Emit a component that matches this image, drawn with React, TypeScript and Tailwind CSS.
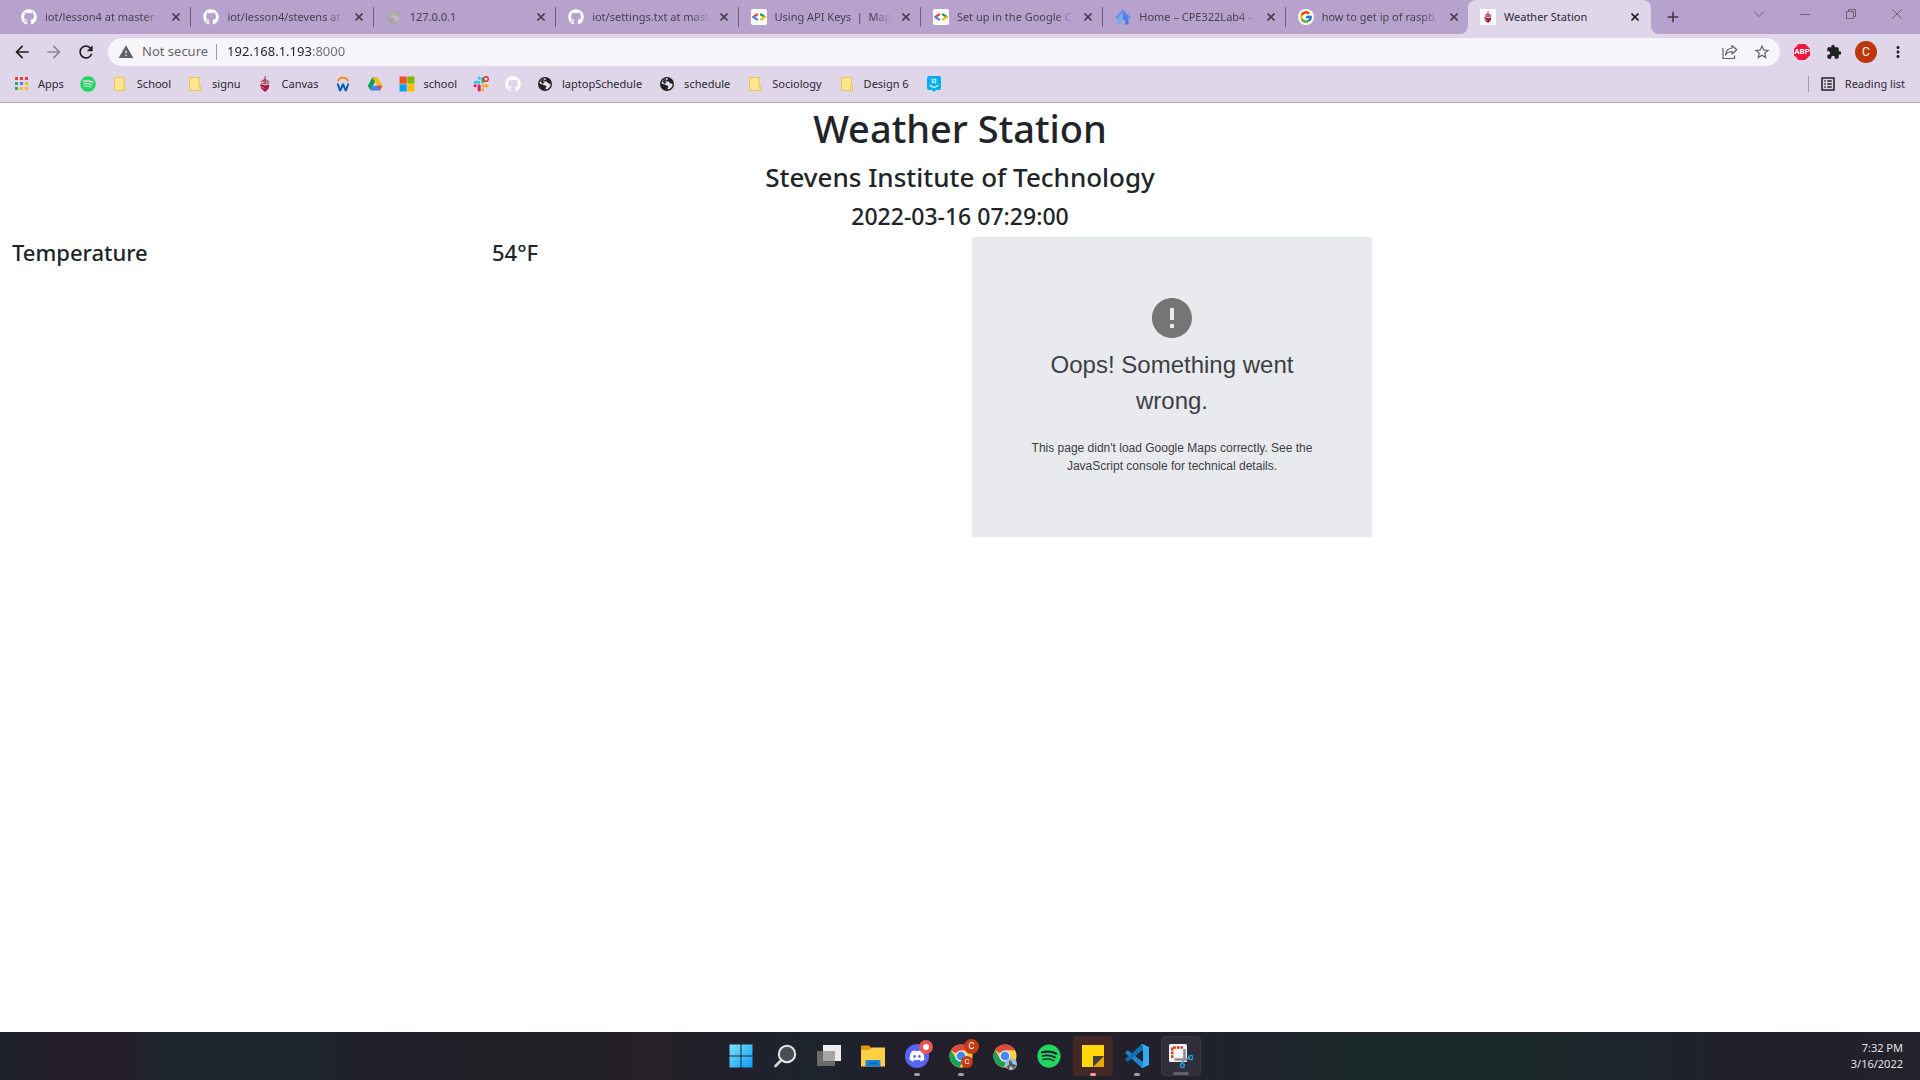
import type { ReactNode } from "react";
import {
  MdArrowBack,
  MdArrowForward,
  MdRefresh,
  MdWarning,
  MdStarBorder,
  MdExtension,
  MdMoreVert,
  MdAdd,
  MdListAlt,
  MdError,
} from "react-icons/md";
import { FaGithub, FaSpotify, FaDiscord } from "react-icons/fa";
import { FcGoogle } from "react-icons/fc";

/* ---------- Small drawings ---------- */

function GithubMark() {
  return <FaGithub className="size-4 text-white" />;
}

function GlobeMark({ tone, land }: { tone: string; land: string }) {
  return (
    <svg viewBox="0 0 16 16" className="size-4">
      <circle cx="8" cy="8" r="7" fill={tone} />
      <path
        d="M8.500 2.300c.8.900 0 1.700-1 1.900-.9.200-.6 1.300.2 1.400 1.300.200 2.200-.2 2.800.9.600 1.200 2.100.9 3.200 1.600-.2 2.700-2 4.900-4.500 5.500-.9-.6-.8-1.900.1-2.600.6-.6-.1-1.500-1.100-1.500-1.700 0-2.300-1.300-3.900-1.500l-1.700-.4C2.800 5 5.200 2.400 8.500 2.300z"
        fill={land}
      />
      <path d="M3.500 5.500 5.800 3l1.500.3-1 2.200 1.200 1.500-2 .8z" fill={tone} />
    </svg>
  );
}

function DevTile() {
  return (
    <svg viewBox="0 0 16 16" className="size-4">
      <rect width="16" height="16" rx="2" fill="#fff" />
      <g fill="none" strokeWidth="2.2">
        <path d="M6.800 5 1.700 8.300" stroke="#ea4335" />
        <path d="M1.700 7.700 6.800 11" stroke="#4285f4" />
        <path d="M9.200 5 14.300 8.300" stroke="#0f9d58" />
        <path d="M14.300 7.700 9.200 11" stroke="#fbbc04" />
      </g>
    </svg>
  );
}

function HomeMark() {
  return (
    <svg viewBox="0 0 16 16" className="size-4">
      <path d="M2.500 8 8 3v12.500H2.500z" fill="#7da7f0" />
      <path d="M8 3l5.500 5v7.500H10V11H8z" fill="#4a7fe0" />
      <path d="M6 11h3.600v4.500H6z" fill="#b7a2ce" />
      <path d="M.8 9 8 2l7.200 7" fill="none" stroke="#5f8fe8" strokeWidth="2" />
    </svg>
  );
}

function GoogleTile() {
  return (
    <span className="flex size-4 items-center justify-center rounded-full bg-white">
      <FcGoogle className="size-3.5" />
    </span>
  );
}

function CanvasShape({ className }: { className: string }) {
  return (
    <svg viewBox="0 0 16 16" className={className}>
      <path d="M7.600 0h1.200l-.2 3 3.600 2v2.300L8 8.600 3.800 7.300V5.200l3.500-2.100z" fill="#b4435c" />
      <path d="M8.500 3.500 12.200 5v2.200l-3 .8z" fill="#9c8f9a" />
      <path d="M4.200 6.300h3.400" stroke="#fff" strokeWidth=".8" />
      <path d="M3 8.800l1.500-.5L8 9.600l4-1.200.4.600-.8 3.600L8.200 16l-3.600-3z" fill="#a6193c" />
      <path d="M4.500 10.800 7.500 12.500" stroke="#e3a3b1" strokeWidth=".8" />
    </svg>
  );
}

function CanvasMark() {
  return <CanvasShape className="size-4" />;
}

function StationTile() {
  return (
    <span className="flex size-4 items-center justify-center bg-white">
      <CanvasShape className="size-3" />
    </span>
  );
}

function AppsMark() {
  const colors = ["#ea4335", "#ea4335", "#ea4335", "#34a853", "#4285f4", "#fbbc04", "#34a853", "#fbbc04", "#fbbc04"];
  return (
    <svg viewBox="0 0 16 16" className="size-4">
      {colors.map((c, i) => (
        <rect key={i} x={2 + (i % 3) * 5} y={1 + Math.floor(i / 3) * 5} width="3" height="3" fill={c} />
      ))}
    </svg>
  );
}

function FolderMark() {
  return (
    <svg viewBox="0 0 16 16" className="size-4">
      <path d="M2.500 1.500h10v9h1v4h-11z" fill="#ffe58f" stroke="#e9c558" />
      <path d="M11.500 14.500v-4h2v4z" fill="#ffefb0" stroke="#e9c558" />
    </svg>
  );
}

function WorkdayMark() {
  return (
    <svg viewBox="0 0 16 16" className="size-4">
      <path d="M2.900 5.500A5.300 5.300 0 0 1 13.100 5.500" fill="none" stroke="#f38b00" strokeWidth="1.700" />
      <path d="M2.600 7.500 5.200 14.800 8 8l2.800 6.800 2.600-7.300" fill="none" stroke="#0b5cb4" strokeWidth="2" strokeLinejoin="bevel" />
    </svg>
  );
}

function DriveMark() {
  return (
    <svg viewBox="0 0 16 16" className="size-4">
      <path d="M5.300 1.500h5.300L8 6.100 3.400 14.300.8 9.700z" fill="#0f9d58" />
      <path d="M5.400 1.500h5.200l4.800 8.300h-5.200z" fill="#fbbc04" />
      <path d="M5.600 9.800h9.800l-2.700 4.600H3.200z" fill="#4285f4" />
      <path d="M10.200 9.800h5.200l-2.700 4.600z" fill="#ea4335" />
    </svg>
  );
}

function MicrosoftMark() {
  return (
    <svg viewBox="0 0 16 16" className="size-4">
      <path d="M.5.5h7.200v7.200H.5z" fill="#f25022" />
      <path d="M8.300.5h7.200v7.200H8.300z" fill="#7fba00" />
      <path d="M.5 8.300h7.200v7.200H.5z" fill="#00a4ef" />
      <path d="M8.300 8.300h7.200v7.200H8.300z" fill="#ffb900" />
    </svg>
  );
}

function SlackMark() {
  return (
    <svg viewBox="0 0 16 16" className="size-4">
      <g strokeWidth="3" strokeLinecap="round">
        <path d="M2 6.200h3.800M6.200 2v.2" stroke="#36c5f0" />
        <path d="M9.800 2.600v3.200" stroke="#2eb67d" />
        <path d="M9.800 9.800H14M9.800 13.800v.2" stroke="#ecb22e" />
        <path d="M6.200 9.800v4.200M2 9.800h.3" stroke="#e01e5a" />
      </g>
      <circle cx="13" cy="3" r="2.200" fill="#fff" stroke="#e8202a" strokeWidth="1.400" />
    </svg>
  );
}

function GroupMark() {
  return (
    <svg viewBox="0 0 16 16" className="size-4">
      <path d="M3 0h10a2 2 0 0 1 2 2v10a2 2 0 0 1-2 2h-3l-2 2-2-2H3a2 2 0 0 1-2-2V2a2 2 0 0 1 2-2z" fill="#00aff0" />
      <path d="M6.700 2.500v5M9.300 2.500v5M5.400 3.800h5.200M5.400 6.200h5.200" stroke="#c9ecfa" strokeWidth="1" />
      <path d="M3.800 8.800c1.600 3.200 6.800 3.200 8.400 0" fill="none" stroke="#e6f7fd" strokeWidth="1.300" />
    </svg>
  );
}

function ShareMark() {
  return (
    <svg viewBox="0 0 16 16" className="size-4" fill="none" stroke="#5f6368" strokeWidth="1.200">
      <path d="M1 4v10.500h11.500v-3" />
      <path d="M10 1.500 14.800 5.700 10 10V7.500C7 7.500 5 8.500 3.600 11 4 7 6 4.300 10 4z" strokeLinejoin="round" />
    </svg>
  );
}

function AbpMark() {
  return (
    <span className="relative flex h-4 w-4 items-center justify-center">
      <svg viewBox="0 0 16 16" className="absolute inset-0 size-4">
        <path d="M4.700 0h6.600L16 4.700v6.600L11.300 16H4.700L0 11.300V4.700z" fill="#f2173f" />
      </svg>
      <span className="relative font-['Roboto'] text-[8px] leading-none font-bold text-white">ABP</span>
    </span>
  );
}

/* ---------- Browser ---------- */

type TabInfo = { title: string; icon: ReactNode };

const tabs: TabInfo[] = [
  { title: "iot/lesson4 at master ·", icon: <GithubMark /> },
  { title: "iot/lesson4/stevens at", icon: <GithubMark /> },
  { title: "127.0.0.1", icon: <GlobeMark tone="#a9a6a6" land="#c3b5d2" /> },
  { title: "iot/settings.txt at mast", icon: <GithubMark /> },
  { title: "Using API Keys  |  Map", icon: <DevTile /> },
  { title: "Set up in the Google C", icon: <DevTile /> },
  { title: "Home – CPE322Lab4 –", icon: <HomeMark /> },
  { title: "how to get ip of raspb", icon: <GoogleTile /> },
];

function CloseTab({ title, tone }: { title: string; tone: string }) {
  return (
    <button type="button" aria-label={`Close ${title}`} className={`flex size-4 shrink-0 items-center justify-center ${tone}`}>
      <svg viewBox="0 0 8 8" className="size-2" stroke="currentColor" strokeWidth="1.600">
        <path d="M.5.5l7 7M7.500.5l-7 7" />
      </svg>
    </button>
  );
}

function Tab({ tab, last }: { tab: TabInfo; last: boolean }) {
  const fade =
    tab.title.length > 12 ? "[mask-image:linear-gradient(to_right,black_84%,transparent)]" : "";
  return (
    <div className="flex min-w-0 flex-1 items-center">
      <a href="#tab" className="flex min-w-0 flex-1 items-center gap-2 pl-3">
        <span className="shrink-0">{tab.icon}</span>
        <span className={`min-w-0 flex-1 overflow-hidden whitespace-pre text-[#463f50] ${fade}`}>{tab.title}</span>
      </a>
      <span className={`flex h-5 items-center px-1.5 ${last ? "" : "border-r border-[#6f6280]"}`}>
        <CloseTab title={tab.title} tone="text-[#463f50]" />
      </span>
    </div>
  );
}

function WindowButton({ label, children }: { label: string; children: ReactNode }) {
  return (
    <button type="button" aria-label={label} className="flex h-7 w-[46px] items-center justify-center">
      <svg viewBox="0 0 12 12" className="size-3" fill="none" stroke="#6e6279">
        {children}
      </svg>
    </button>
  );
}

function TabStrip() {
  return (
    <div className="flex h-[34px] bg-[#dfd6e9] text-[11px]">
      <nav aria-label="Tabs" className="flex w-[1468px] min-w-0 shrink rounded-br-lg bg-[#b7a2ce] pl-[9px]">
        {tabs.map((t, i) => (
          <Tab key={i} tab={t} last={i === tabs.length - 1} />
        ))}
      </nav>
      <div className="w-[183px] shrink-0 bg-[linear-gradient(#b7a2ce_50%,#dfd6e9_50%)]">
        <div className="flex h-full items-center rounded-t-lg bg-[#dfd6e9]">
          <a href="#tab" aria-current="page" className="flex min-w-0 flex-1 items-center gap-2 pl-3">
            <StationTile />
            <span className="text-[#2b2733]">Weather Station</span>
          </a>
          <span className="flex items-center px-2">
            <CloseTab title="Weather Station" tone="text-[#202124]" />
          </span>
        </div>
      </div>
      <div className="flex flex-1 justify-between rounded-bl-lg bg-[#b7a2ce]">
        <button type="button" aria-label="New tab" className="flex w-11 items-center justify-center text-[#3c3546]">
          <MdAdd className="size-[18px]" />
        </button>
        <div className="flex">
          <WindowButton label="Search tabs">
            <path d="M1 3.500l5 5 5-5" />
          </WindowButton>
          <WindowButton label="Minimize">
            <path d="M1 6.500h10" />
          </WindowButton>
          <WindowButton label="Restore">
            <path d="M1.500 3.500h7v7h-7zM3.500 3.500v-2h7v7h-2" />
          </WindowButton>
          <WindowButton label="Close">
            <path d="M1 1l10 10M11 1 1 11" />
          </WindowButton>
        </div>
      </div>
    </div>
  );
}

function ToolButton({ label, children }: { label: string; children: ReactNode }) {
  return (
    <button type="button" aria-label={label} className="flex size-8 shrink-0 items-center justify-center text-[#202124]">
      {children}
    </button>
  );
}

function Toolbar() {
  return (
    <div className="flex h-9 items-center bg-[#dfd6e9] px-1.5">
      <ToolButton label="Back">
        <MdArrowBack className="size-5" />
      </ToolButton>
      <ToolButton label="Forward">
        <MdArrowForward className="size-5 text-[#8f8a96]" />
      </ToolButton>
      <ToolButton label="Reload">
        <MdRefresh className="size-5" />
      </ToolButton>
      <form className="mx-1.5 flex h-7 flex-1 items-center rounded-full bg-[#f7f5fa] pr-0.5 pl-2.5 text-[13px]">
        <MdWarning className="size-4 text-[#5f6368]" />
        <label htmlFor="address" className="ml-2 text-[#66666b]">
          Not secure
        </label>
        <span className="mr-2.5 ml-2 h-4 w-px bg-[#9d9ba3]" />
        <input
          id="address"
          type="text"
          defaultValue="192.168.1.193:8000"
          className="min-w-0 flex-1 bg-[linear-gradient(to_right,#202124_85px,#6b6870_85px)] bg-clip-text text-transparent outline-none"
        />
        <ToolButton label="Share">
          <ShareMark />
        </ToolButton>
        <ToolButton label="Bookmark this page">
          <MdStarBorder className="size-[18px] text-[#5f6368]" />
        </ToolButton>
      </form>
      <ToolButton label="Adblock Plus">
        <AbpMark />
      </ToolButton>
      <ToolButton label="Extensions">
        <MdExtension className="size-4" />
      </ToolButton>
      <ToolButton label="Profile">
        <span className="flex size-[22px] items-center justify-center rounded-full bg-[#bf360c] font-['Roboto'] text-xs text-white">C</span>
      </ToolButton>
      <ToolButton label="Menu">
        <MdMoreVert className="size-[18px]" />
      </ToolButton>
    </div>
  );
}

const globe = <GlobeMark tone="#202124" land="#e9e3ef" />;

const bookmarks: { name: string; label?: string; icon: ReactNode }[] = [
  { name: "Apps", label: "Apps", icon: <AppsMark /> },
  { name: "Spotify", icon: <FaSpotify className="size-4 text-[#1ed760]" /> },
  { name: "School", label: "School", icon: <FolderMark /> },
  { name: "signu", label: "signu", icon: <FolderMark /> },
  { name: "Canvas", label: "Canvas", icon: <CanvasMark /> },
  { name: "Workday", icon: <WorkdayMark /> },
  { name: "Drive", icon: <DriveMark /> },
  { name: "school", label: "school", icon: <MicrosoftMark /> },
  { name: "Slack", icon: <SlackMark /> },
  { name: "GitHub", icon: <GithubMark /> },
  { name: "laptopSchedule", label: "laptopSchedule", icon: globe },
  { name: "schedule", label: "schedule", icon: globe },
  { name: "Sociology", label: "Sociology", icon: <FolderMark /> },
  { name: "Design 6", label: "Design 6", icon: <FolderMark /> },
  { name: "GroupMe", icon: <GroupMark /> },
];

function BookmarksBar() {
  return (
    <div className="flex h-[33px] items-center border-b border-[#b3abbc] bg-[#dfd6e9] pr-[15px] pb-1 pl-[13px] text-[11px] text-[#2b2733]">
      <nav aria-label="Bookmarks" className="flex flex-1 items-center gap-4">
        {bookmarks.map((b) => (
          <a key={b.name} href="#bookmark" aria-label={b.name} className="flex items-center gap-[9px]">
            {b.icon}
            {b.label && <span className={b.label.length > 6 ? "pr-px" : ""}>{b.label}</span>}
          </a>
        ))}
      </nav>
      <button type="button" className="flex h-4 items-center gap-2 border-l border-[#a79db3] pl-2.5">
        <MdListAlt className="size-[18px] text-[#202124]" />
        Reading list
      </button>
    </div>
  );
}

/* ---------- Page ---------- */

function Page() {
  return (
    <main className="flex-1 bg-white font-medium text-[#212529]">
      <header className="pb-[7px] text-center">
        <h1 className="text-[38px] leading-[50px]">Weather Station</h1>
        <h3 className="mt-[7px] text-[26px] leading-[34px]">Stevens Institute of Technology</h3>
        <h4 className="mt-2 text-[23px] leading-7">2022-03-16 07:29:00</h4>
      </header>
      <section className="grid grid-cols-4 text-[22px] leading-[30px]">
        <h4 className="px-3">Temperature</h4>
        <h4 className="px-3">54°F</h4>
        <div className="px-3">
          <div className="flex h-[300px] w-[400px] flex-col items-center justify-center bg-[#e8eaed] px-12 pb-1.5 text-center font-['Liberation_Sans'] font-normal text-[#3c4043]">
            <MdError className="size-12 text-[#757575]" />
            <p className="mt-[5px] px-2 text-2xl leading-9">Oops! Something went wrong.</p>
            <p className="mt-5 text-xs leading-[18px]">
              This page didn't load Google Maps correctly. See the JavaScript console for technical details.
            </p>
          </div>
        </div>
      </section>
    </main>
  );
}

/* ---------- Taskbar ---------- */

function WindowsMark() {
  return (
    <svg viewBox="0 0 24 24" className="size-6">
      <defs>
        <linearGradient id="win" x1="0" y1="0" x2="1" y2="1" gradientUnits="objectBoundingBox">
          <stop offset="0" stopColor="#7fe0ff" />
          <stop offset="1" stopColor="#0a9cf5" />
        </linearGradient>
      </defs>
      <path d="M.5.5h11v11H.5zM12.500.5h11v11h-11zM.5 12.500h11v11H.5zM12.500 12.500h11v11h-11z" fill="url(#win)" />
    </svg>
  );
}

function SearchMark() {
  return (
    <svg viewBox="0 0 24 24" className="size-6">
      <circle cx="14" cy="10" r="8.200" fill="#4a4f56" stroke="#e6e6e6" strokeWidth="2" />
      <path d="M8 16.500 2.500 22" stroke="#d6d6d6" strokeWidth="2.600" strokeLinecap="round" />
    </svg>
  );
}

function TaskViewMark() {
  return (
    <svg viewBox="0 0 24 24" className="size-6">
      <rect x="6" y="1" width="18" height="16" fill="#ececec" />
      <rect x="0" y="7" width="18" height="15" fill="#6b6b6b" />
      <rect x="6" y="7" width="12" height="10" fill="#a5a5a5" />
    </svg>
  );
}

function ExplorerMark() {
  return (
    <svg viewBox="0 0 24 24" className="size-6">
      <path d="M0 1.500h8l2.500 2.500V8H0z" fill="#e09b0b" />
      <path d="M0 6h8l3-2.500h13V22.500H0z" fill="#ffcf48" />
      <path d="M6 16h12a1.500 1.500 0 0 1 1.500 1.500v5h-15v-5A1.500 1.500 0 0 1 6 16z" fill="#1583d8" />
      <path d="M8 19.500h8" stroke="#0a5da8" strokeWidth="1.500" />
    </svg>
  );
}

function ChromeMark() {
  return (
    <svg viewBox="0 0 24 24" className="size-6">
      <circle cx="12" cy="12" r="11.500" fill="#ffcd40" />
      <path d="M12 12 2 6.300A11.500 11.500 0 0 1 22 6.300H12z" fill="#dd4b3e" />
      <path d="M2.050 6.200 7.100 15a5.600 5.600 0 0 0 6.400 2.300L10.500 23.400A11.500 11.500 0 0 1 2.050 6.200z" fill="#17a05e" />
      <circle cx="12" cy="12" r="5.600" fill="#f1f1f1" />
      <circle cx="12" cy="12" r="4.300" fill="#4285f4" />
    </svg>
  );
}

function ProfileBadges() {
  return (
    <>
      <span className="absolute top-[3px] right-0.5 flex size-[15px] items-center justify-center rounded-full bg-[#c53a12] font-['Roboto'] text-[9px] text-white">
        C
      </span>
      <span className="absolute right-2 bottom-2 flex size-3 items-center justify-center rounded-full bg-[#c53a12] font-['Roboto'] text-[8px] text-white">
        C
      </span>
    </>
  );
}

function PhotoBadge() {
  return (
    <svg viewBox="0 0 12 12" className="absolute right-2 bottom-1.5 size-3">
      <circle cx="6" cy="6" r="6" fill="#9cc0dc" />
      <path d="M4 3.500 5 2l1.500 1.500L7.500 6l3.500 1-1.500 3L6 12l-3.500-1.500L2 8l2-1z" fill="#4b5562" />
      <path d="M4.500 8.500h3V12h-3z" fill="#c9c2ba" />
    </svg>
  );
}

function NotesMark() {
  return (
    <svg viewBox="0 0 24 24" className="size-6">
      <path d="M1 1h22v11L12 23H1z" fill="#ffd80a" />
      <path d="M12 12h11v11H12z" fill="#e8a90c" />
      <path d="M12 12h11L12 23z" fill="#40403e" />
    </svg>
  );
}

function CodeMark() {
  return (
    <svg viewBox="0 0 24 24" className="size-6">
      <path d="M.5 7.900 2.700 6.300 18 18v6L16.500 23.500.5 9.200z" fill="#1b88cf" />
      <path d="M.5 16.100 2.700 17.700 18 6V0L16.500.5.5 14.800z" fill="#0f6fb3" />
      <path d="M17.500 0 24 3v18l-6.500 3-1.500-1 2-1V2l-2-1z" fill="#36a8f2" />
    </svg>
  );
}

function SnipMark() {
  return (
    <svg viewBox="0 0 24 24" className="size-6">
      <rect x="0" y="0" width="18" height="18" rx="1.500" fill="#f5f5f5" />
      <path d="M3.200 14V3.500H14" fill="none" stroke="#d8401c" strokeWidth="2.600" strokeDasharray="2.800 1" />
      <path d="M15.500 5v10.500M5.500 15.500h13" stroke="#8c8f93" strokeWidth="2.600" />
      <path d="m15 15-2 5M16 15.500l5-2" stroke="#8c8f93" strokeWidth="1.800" />
      <circle cx="13.300" cy="21.500" r="2" fill="none" stroke="#1c9be6" strokeWidth="1.500" />
      <circle cx="21.800" cy="13.500" r="2" fill="none" stroke="#1c9be6" strokeWidth="1.500" />
    </svg>
  );
}

function DiscordMark() {
  return (
    <span className="flex size-6 items-center justify-center rounded-full bg-[#5865f2]">
      <FaDiscord className="size-4 text-white" />
    </span>
  );
}

type TaskItem = { name: string; icon: ReactNode; badge?: ReactNode; cell?: string; mark?: string };

const tasks: TaskItem[] = [
  { name: "Start", icon: <WindowsMark /> },
  { name: "Search", icon: <SearchMark /> },
  { name: "Task view", icon: <TaskViewMark /> },
  { name: "File Explorer", icon: <ExplorerMark /> },
  {
    name: "Discord",
    icon: <DiscordMark />,
    badge: <span className="absolute top-1 right-1 size-3.5 rounded-full border-4 border-[#ef5350] bg-white" />,
    mark: "w-1.5 bg-[#a0a0a5]",
  },
  { name: "Chrome profile", icon: <ChromeMark />, badge: <ProfileBadges />, mark: "w-1.5 bg-[#a0a0a5]" },
  { name: "Chrome", icon: <ChromeMark />, badge: <PhotoBadge /> },
  { name: "Spotify player", icon: <FaSpotify className="size-6 text-[#1ed760]" /> },
  { name: "Sticky Notes", icon: <NotesMark />, cell: "bg-[#452728]", mark: "w-1.5 bg-[#ff99a4]" },
  { name: "Visual Studio Code", icon: <CodeMark />, mark: "w-1.5 bg-[#a0a0a5]" },
  { name: "Snipping Tool", icon: <SnipMark />, cell: "border border-[#3a3842] bg-[#302e38]", mark: "w-4 bg-[#606066]" },
];

function Taskbar() {
  return (
    <footer className="grid h-12 grid-cols-[1fr_auto_1fr] items-center bg-[linear-gradient(to_right,#1e222c_0%,#241f2b_3%,#241f2b_6%,#1c252e_9%,#1c252e_16%,#221f2b_20%,#222126_26%,#252126_34%,#20202b_38%,#1d242d_42%,#221f2b_48%,#22212b_60%,#1e232c_66%,#1b2828_70%,#1b2829_80%,#1e232d_86%,#231f2b_94%,#22222c_100%)]">
      <span />
      <nav aria-label="Taskbar" className="flex gap-1 pl-0.5">
        {tasks.map((t) => (
          <button
            key={t.name}
            type="button"
            aria-label={t.name}
            className={`relative flex size-10 items-center justify-center rounded ${t.cell ?? ""}`}
          >
            {t.icon}
            {t.badge}
            {t.mark && (
              <span className="absolute inset-x-0 bottom-0 flex justify-center">
                <span className={`h-[3px] rounded-full ${t.mark}`} />
              </span>
            )}
          </button>
        ))}
      </nav>
      <div className="pr-[17px] text-right text-[11px] leading-4 text-[#e2e2e4]">
        <p>7:32 PM</p>
        <p>3/16/2022</p>
      </div>
    </footer>
  );
}

export default function App() {
  return (
    <div className="flex min-h-screen flex-col font-['Noto_Sans',sans-serif]">
      <TabStrip />
      <Toolbar />
      <BookmarksBar />
      <Page />
      <Taskbar />
    </div>
  );
}
